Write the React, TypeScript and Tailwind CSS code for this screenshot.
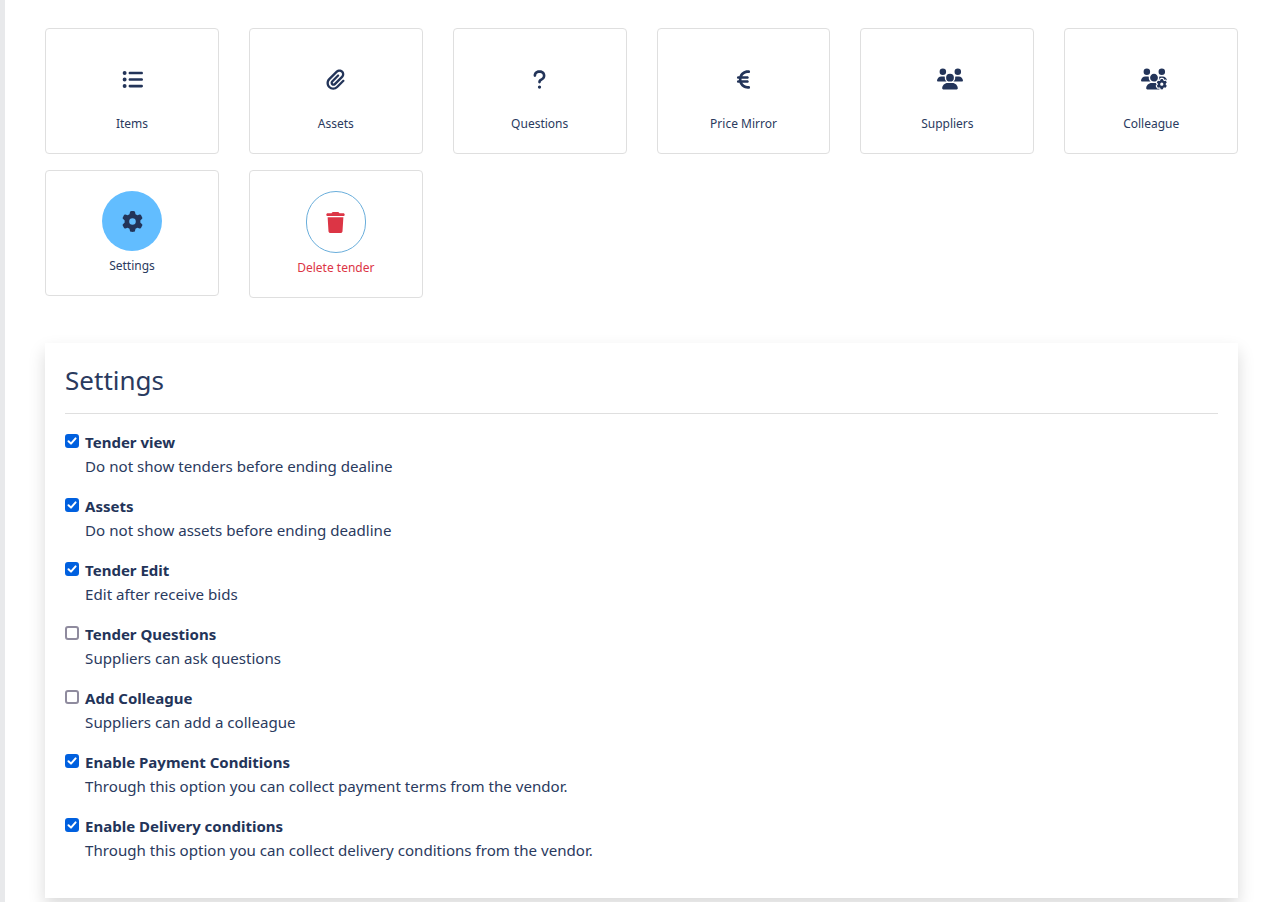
import type { IconType } from "react-icons";
import { FaEuroSign, FaGear, FaListUl, FaPaperclip, FaQuestion, FaTrash, FaUsers, FaUsersGear } from "react-icons/fa6";

const tiles: { label: string; icon: IconType; size: number; iconClass?: string }[] = [
  { label: "Items", icon: FaListUl, size: 21 },
  { label: "Assets", icon: FaPaperclip, size: 21 },
  { label: "Questions", icon: FaQuestion, size: 21 },
  { label: "Price Mirror", icon: FaEuroSign, size: 21 },
  { label: "Suppliers", icon: FaUsers, size: 26, iconClass: "ml-[6px]" },
  { label: "Colleague", icon: FaUsersGear, size: 26, iconClass: "ml-[6px]" },
];

const options = [
  { title: "Tender view", text: "Do not show tenders before ending dealine", checked: true },
  { title: "Assets", text: "Do not show assets before ending deadline", checked: true },
  { title: "Tender Edit", text: "Edit after receive bids", checked: true },
  { title: "Tender Questions", text: "Suppliers can ask questions", checked: false },
  { title: "Add Colleague", text: "Suppliers can add a colleague", checked: false },
  { title: "Enable Payment Conditions", text: "Through this option you can collect payment terms from the vendor.", checked: true },
  { title: "Enable Delivery conditions", text: "Through this option you can collect delivery conditions from the vendor.", checked: true },
];

function Tile({ label, icon: Icon, size, iconClass }: { label: string; icon: IconType; size: number; iconClass?: string }) {
  return (
    <div className="flex h-[126px] flex-col items-center rounded border border-[#dfdfdf] bg-white pt-5">
      <div className="flex h-[60px] w-[60px] items-center justify-center text-[#233459]">
        <Icon size={size} className={iconClass} />
      </div>
      <span className="mt-[5px] text-[12px] leading-[20px] text-[#2a3a5e]">{label}</span>
    </div>
  );
}

export default function App() {
  return (
    <div className="min-h-[902px] border-l-[5px] border-[#e8e9eb] bg-white font-['Noto_Sans',sans-serif] text-[#233459]">
      <div className="pl-[40.1px] pr-[22.9px] pt-7">
        <div className="grid grid-cols-6 items-start gap-x-[30px] gap-y-4">
          {tiles.map((tile) => (
            <Tile key={tile.label} label={tile.label} icon={tile.icon} size={tile.size} iconClass={tile.iconClass} />
          ))}

          <div className="flex h-[126px] flex-col items-center rounded border border-[#dfdfdf] bg-white pt-5">
            <div className="flex h-[60px] w-[60px] items-center justify-center rounded-full bg-[#62bdff] text-[#233459]">
              <FaGear size={21} />
            </div>
            <span className="mt-[5px] text-[12px] leading-[20px] text-[#2a3a5e]">Settings</span>
          </div>

          <div className="flex h-[128px] flex-col items-center rounded border border-[#dfdfdf] bg-white pt-5">
            <div className="flex h-[62px] w-[60px] items-center justify-center rounded-full border border-[#6aaedb] text-[#dc3545]">
              <FaTrash size={21} />
            </div>
            <span className="mt-[5px] text-[12px] leading-[20px] text-[#dc3545]">Delete tender</span>
          </div>
        </div>

        <div className="mt-[45px] bg-white px-5 pb-5 pt-[19px] shadow-[0_8px_16px_rgba(0,0,0,0.15)]">
          <h2 className="pb-[15px] text-[26px] leading-[36px] text-[#2a3a5e]">Settings</h2>
          <div className="mb-4 border-t border-[#dfdfdf]" />
          {options.map((option) => (
            <label key={option.title} className="mb-4 flex items-start gap-1.5">
              <span className="relative mt-[4px] h-[14px] w-[14px] shrink-0">
                <input
                  type="checkbox"
                  defaultChecked={option.checked}
                  className="peer m-0 block h-[14px] w-[14px] appearance-none rounded-[3px] border-2 border-[#8f8b9e] bg-white checked:border-[#0060df] checked:bg-[#0060df]"
                />
                <svg
                  viewBox="0 0 14 14"
                  className="pointer-events-none absolute left-0 top-0 hidden h-[14px] w-[14px] peer-checked:block"
                  fill="none"
                  stroke="#fff"
                  strokeWidth="2"
                  strokeLinecap="round"
                  strokeLinejoin="round"
                >
                  <path d="M3.5 7.2 6 9.6l4.6-5.2" />
                </svg>
              </span>
              <span className="block">
                <span className="block text-[15px] font-bold leading-[24px]">{option.title}</span>
                <span className="block text-[15.1px] leading-[24px] text-[#2a3a5e]">{option.text}</span>
              </span>
            </label>
          ))}
        </div>
      </div>
    </div>
  );
}
